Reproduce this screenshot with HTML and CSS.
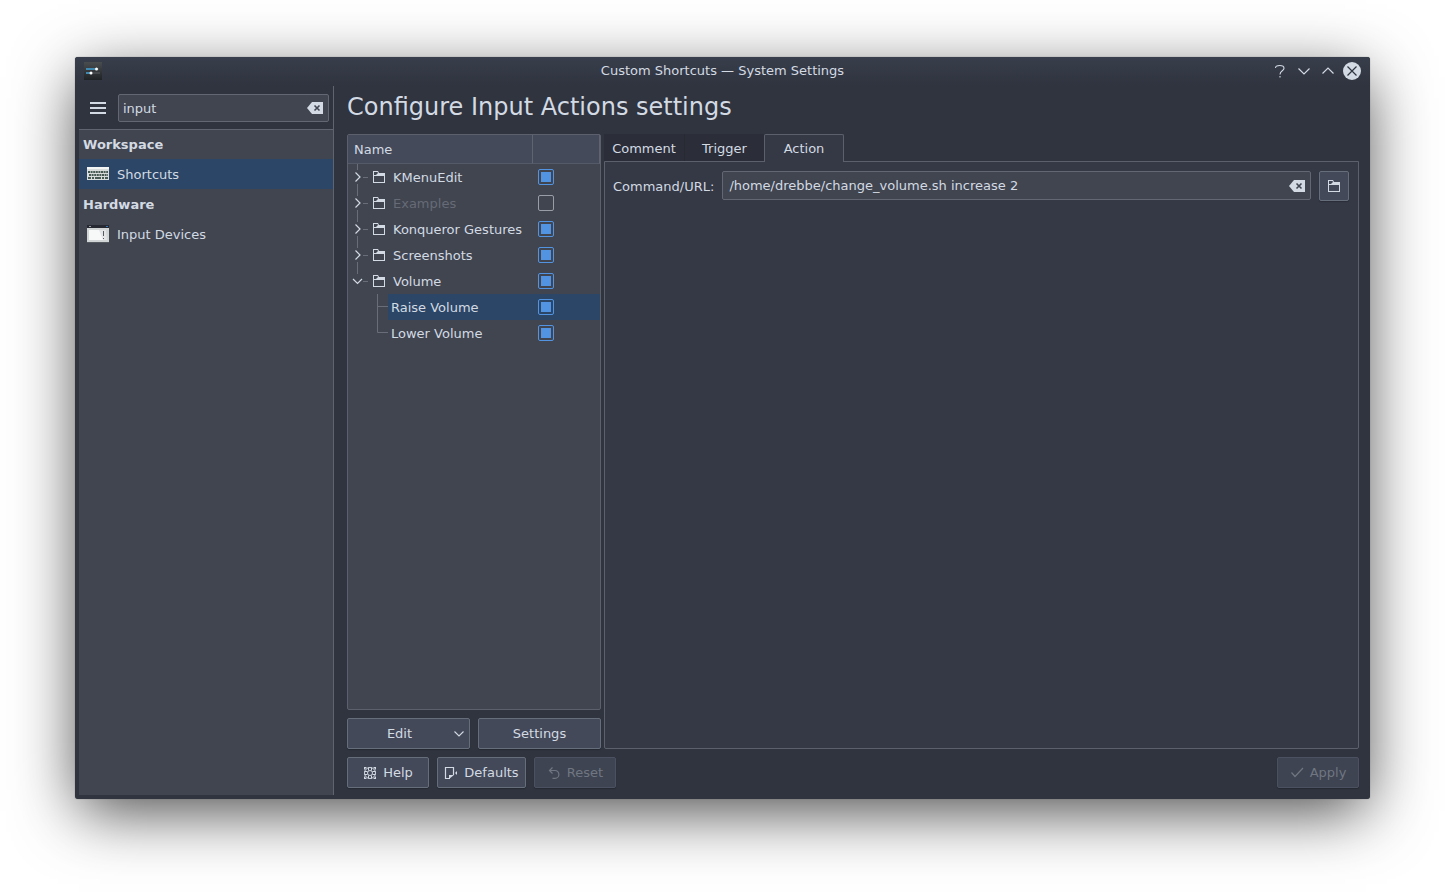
FILE: index.html
```html
<!DOCTYPE html>
<html lang="en">
<head>
<meta charset="utf-8">
<title>Custom Shortcuts — System Settings</title>
<link rel="stylesheet" href="styles.css">
</head>
<body>
<svg class="defs" aria-hidden="true">
  <symbol id="folder" viewBox="0 0 16 16"><path fill="currentColor" fill-rule="evenodd" d="M2 2h5l1 2h6v10H2zM3 3v3h2l2-2-.5-1zM3 7v6h10V7z"/></symbol>
  <symbol id="clear" viewBox="0 0 16 12"><path fill="currentColor" d="M5 0h11v12H5L0 6z"/><path stroke="#404552" stroke-width="1.6" d="M7.500 3.500l5 5m0-5l-5 5"/></symbol>
  <symbol id="down" viewBox="0 0 12 8"><path fill="none" stroke="currentColor" stroke-width="1.100" d="M1.500 1.500L6 6l4.500-4.500"/></symbol>
  <symbol id="branch-closed" viewBox="0 0 24 26"><path stroke="#686d79" fill="none" d="M9.500 0v6M9.500 20v6M15 13.500h5"/><path stroke="#d3dae3" stroke-width="1.200" fill="none" d="M7.500 8.500l4.500 4.500-4.500 4.500"/></symbol>
  <symbol id="branch-open" viewBox="0 0 24 26"><path stroke="#686d79" fill="none" d="M9.500 0v6M15 13.500h5"/><path stroke="#d3dae3" stroke-width="1.200" fill="none" d="M5 11l4.500 4.500 4.500-4.500"/></symbol>
</svg>
<div class="window">
  <header class="titlebar">
    <svg class="app-icon" width="18" height="18" viewBox="0 0 18 18"><defs><linearGradient id="ai" x1="0" y1="0" x2="0" y2="1"><stop offset="0" stop-color="#4a4d50"/><stop offset="1" stop-color="#202325"/></linearGradient></defs><path fill="url(#ai)" d="M0 0h18v18H0z"/><path fill="#3f89b0" d="M2 6h9v2H2zM2 10h4v2H2z"/><path fill="#44484b" d="M8 10h8v2H8zM13 6h2v2h-2z"/><circle cx="12.500" cy="7" r="1.500" fill="#fff"/><circle cx="7" cy="11" r="1.500" fill="#fff"/></svg>
    <h1 class="window-title">Custom Shortcuts — System Settings</h1>
    <div class="window-controls">
      <button class="wm" aria-label="Help"><svg width="18" height="18" viewBox="0 0 18 18"><path fill="none" stroke="#d3dae3" stroke-width="1.100" d="M4.500 6c0-2 1.500-2.500 4.200-2.500S13 4.200 13 6.200C13 9 9 8.500 9 12.500"/><path fill="#8b909a" d="M8 14h2v1.500H8z"/></svg></button>
      <button class="wm" aria-label="Minimize"><svg width="18" height="18" viewBox="0 0 18 18"><path fill="none" stroke="#d3dae3" stroke-width="1.200" d="M3.500 6.500L9 12l5.500-5.500"/></svg></button>
      <button class="wm" aria-label="Maximize"><svg width="18" height="18" viewBox="0 0 18 18"><path fill="none" stroke="#d3dae3" stroke-width="1.200" d="M3.500 11.500L9 6l5.500 5.500"/></svg></button>
      <button class="wm" aria-label="Close"><svg width="18" height="18" viewBox="0 0 18 18"><circle cx="9" cy="9" r="9" fill="#d3dae3"/><path stroke="#2f343f" stroke-width="1.200" d="M4.500 4.500l9 9m0-9l-9 9"/></svg></button>
    </div>
  </header>
  <div class="content">
    <aside class="sidebar">
      <div class="sidebar-tools">
        <button class="menu-button" aria-label="Menu"><svg width="16" height="12" viewBox="0 0 16 12"><path fill="currentColor" d="M0 0h16v2H0zM0 5h16v2H0zM0 10h16v2H0z"/></svg></button>
        <div class="field search">
          <input type="text" value="input" aria-label="Search">
          <button class="clear" aria-label="Clear search"><svg width="16" height="12"><use href="#clear"/></svg></button>
        </div>
      </div>
      <nav class="categories">
        <h2 class="category">Workspace</h2>
        <a class="module selected" href="#shortcuts">
          <svg width="22" height="22" viewBox="0 0 22 22"><path fill="#d9dedd" d="M0 4h22v13H0z"/><path fill="#f4f6f5" d="M0 4h22v2H0z"/><path stroke="#465953" stroke-width="2" stroke-dasharray="2 .6" d="M1 9h20M2 12h19"/><path stroke="#465953" stroke-width="2" d="M1 15h3m1 0h2m1 0h6m1 0h2m1 0h3"/></svg>
          <span class="text">Shortcuts</span></a>
        <h2 class="category">Hardware</h2>
        <a class="module" href="#input-devices">
          <svg width="22" height="22" viewBox="0 0 22 22"><path fill="#262932" d="M0 2h22v3H0z"/><path fill="#9ba0a7" d="M2 3h2v1H2z"/><path fill="#3876b8" d="M19 3h2v1h-2z"/><path fill="#d1d5d6" d="M0 5h22v14H0z"/><path fill="#f7f8f8" d="M2 7h17v10H2z"/><path fill="#e3e5e7" d="M12 7h7l1 10h-4z"/><path fill="#555a60" d="M16 8h1v5h-1zM16 15h1v1h-1zM0 19h22v1H0z"/></svg>
          <span class="text">Input Devices</span></a>
      </nav>
    </aside>
    <main class="main">
      <h2 class="heading">Configure Input Actions settings</h2>
      <div class="panes">
        <section class="tree-pane">
          <div class="tree">
            <table class="actions">
              <thead><tr><th class="name-column">Name</th><th class="check-column" aria-label="Enabled"></th></tr></thead>
              <tbody>
                <tr><td><div class="node"><svg width="24" height="26"><use href="#branch-closed"/></svg><label for="c1"><svg width="16" height="16"><use href="#folder"/></svg><span class="text">KMenuEdit</span></label></div></td><td><input id="c1" type="checkbox" checked></td></tr>
                <tr class="off"><td><div class="node"><svg width="24" height="26"><use href="#branch-closed"/></svg><label for="c2"><svg width="16" height="16"><use href="#folder"/></svg><span class="text">Examples</span></label></div></td><td><input id="c2" type="checkbox"></td></tr>
                <tr><td><div class="node"><svg width="24" height="26"><use href="#branch-closed"/></svg><label for="c3"><svg width="16" height="16"><use href="#folder"/></svg><span class="text">Konqueror Gestures</span></label></div></td><td><input id="c3" type="checkbox" checked></td></tr>
                <tr><td><div class="node"><svg width="24" height="26"><use href="#branch-closed"/></svg><label for="c4"><svg width="16" height="16"><use href="#folder"/></svg><span class="text">Screenshots</span></label></div></td><td><input id="c4" type="checkbox" checked></td></tr>
                <tr><td><div class="node"><svg width="24" height="26"><use href="#branch-open"/></svg><label for="c5"><svg width="16" height="16"><use href="#folder"/></svg><span class="text">Volume</span></label></div></td><td><input id="c5" type="checkbox" checked></td></tr>
                <tr class="current"><td><div class="node leaf"><svg width="40" height="26" viewBox="0 0 40 26"><path fill="none" stroke="#686d79" d="M29.500 0v26M30 12.500h10"/></svg><label for="c6"><span class="text">Raise Volume</span></label></div></td><td><input id="c6" type="checkbox" checked></td></tr>
                <tr><td><div class="node leaf"><svg width="40" height="26" viewBox="0 0 40 26"><path fill="none" stroke="#686d79" d="M29.500 0v12.500H40"/></svg><label for="c7"><span class="text">Lower Volume</span></label></div></td><td><input id="c7" type="checkbox" checked></td></tr>
              </tbody>
            </table>
          </div>
          <div class="tree-buttons">
            <button class="button edit"><span>Edit</span><svg width="12" height="8"><use href="#down"/></svg></button>
            <button class="button">Settings</button>
          </div>
        </section>
        <section class="tab-pane">
          <div class="tabs" role="tablist">
            <button class="tab" role="tab">Comment</button>
            <button class="tab" role="tab">Trigger</button>
            <button class="tab active" role="tab" aria-selected="true">Action</button>
          </div>
          <div class="panel" role="tabpanel">
            <label for="command">Command/URL:</label>
            <div class="field command">
              <input id="command" type="text" value="/home/drebbe/change_volume.sh increase 2">
              <button class="clear" aria-label="Clear command"><svg width="16" height="12"><use href="#clear"/></svg></button>
            </div>
            <button class="button browse" aria-label="Browse"><svg width="16" height="16"><use href="#folder"/></svg></button>
          </div>
        </section>
      </div>
      <footer class="footer">
        <button class="button help"><svg width="14" height="14" viewBox="0 0 14 14"><g fill="none" stroke="currentColor"><circle cx="7" cy="7" r="5.500"/><circle cx="7" cy="7" r="2.500"/><path d="M5.500 1.500v3M8.500 1.500v3M5.500 9.500v3M8.500 9.500v3M1.500 5.500h3M1.500 8.500h3M9.500 5.500h3M9.500 8.500h3"/></g><path fill="currentColor" d="M1 1h3L1 4zM10 1h3v3zM1 10l3 3H1zM13 10v3h-3z"/></svg>Help</button>
        <button class="button defaults"><svg width="14" height="14" viewBox="0 0 14 14"><path fill="none" stroke="currentColor" stroke-width="1.200" d="M6 12.500H1.500V1.500h8V9"/><path fill="currentColor" d="M5 13V9h5zM11 7l2-2v4z"/></svg>Defaults</button>
        <button class="button reset" disabled><svg width="14" height="14" viewBox="0 0 14 14"><path fill="none" stroke="currentColor" stroke-width="1.200" d="M5.500 1.500l-3 3 3 3M2.500 4.500H8a3.800 3.800 0 0 1 0 7.800H5.500"/></svg>Reset</button>
        <button class="button apply" disabled><svg width="14" height="14" viewBox="0 0 14 14"><path fill="none" stroke="currentColor" stroke-width="1.200" d="M1.500 6.500l3.500 4L13 2"/></svg>Apply</button>
      </footer>
    </main>
  </div>
</div>
</body>
</html>
```
FILE: styles.css
```css
* { box-sizing: border-box; }

body {
  margin: 0;
  min-height: 100vh;
  padding: 57px 75px 93px;
  display: flex;
  background: #fff;
  color: #d3dae3;
  font: 13px/16px "DejaVu Sans", sans-serif;
}

button, input { font: inherit; color: inherit; }
button { margin: 0; padding: 0; border: 0; background: none; }
svg { display: block; flex: none; }
h1, h2 { margin: 0; font-size: 13px; }
.defs { display: none; }
.text { padding-top: 2px; }

.window {
  flex: 1;
  display: flex;
  flex-direction: column;
  background: #2f343f;
  border-radius: 3px;
  box-shadow: 0 0 1px #5b6066, 0 16px 60px -4px rgba(0, 0, 0, .72);
}

.titlebar {
  display: grid;
  grid-template-columns: 1fr auto 1fr;
  align-items: center;
  height: 28px;
  padding: 0 9px;
  border-radius: 3px 3px 0 0;
  background: linear-gradient(#383e4b, #2f343f);
}
.window-title { font-weight: normal; }
.window-controls { display: flex; justify-content: flex-end; gap: 6px; }

.content { flex: 1; display: flex; padding: 1px 11px 4px 4px; }

.sidebar {
  width: 255px;
  display: flex;
  flex-direction: column;
  border-right: 1px solid #5f6470;
}
.sidebar-tools {
  display: flex;
  align-items: center;
  gap: 12px;
  height: 43px;
  padding: 0 4px 0 11px;
}
.field {
  display: flex;
  align-items: center;
  height: 28px;
  padding: 0 5px 0 4px;
  border: 1px solid #626773;
  border-radius: 2px;
  background: #404550;
}
.search { flex: 1; min-width: 0; }
.field input {
  flex: 1;
  min-width: 0;
  padding: 0;
  border: 0;
  outline: 0;
  background: transparent;
}
.field.search input { padding-top: 2px; }
.categories { flex: 1; border-top: 1px solid #5f6470; background: #404550; }
.category { padding: 0 4px; line-height: 29px; }
.module + .category { padding-top: 1px; }
.module {
  display: flex;
  align-items: center;
  gap: 8px;
  height: 30px;
  padding: 0 8px;
  color: inherit;
  text-decoration: none;
}
.selected { background: #2b4666; }

.main { flex: 1; min-width: 0; display: flex; flex-direction: column; padding: 0 0 7px 13px; }
.heading { height: 48px; font-size: 24px; line-height: 43px; font-weight: normal; }
.panes { flex: 1; display: flex; gap: 3px; }
.tree-pane { width: 254px; display: flex; flex-direction: column; gap: 8px; }
.tree { flex: 1; border: 1px solid #5b606c; border-radius: 2px; background: #404550; }

.actions { width: 100%; table-layout: fixed; border-collapse: separate; border-spacing: 0; }
.actions th {
  height: 29px;
  padding: 2px 6px 0;
  border-right: 1px solid #5f6470;
  border-bottom: 1px solid #555a68;
  background: #444a5a;
  font-weight: normal;
  text-align: left;
}
.actions .check-column { width: 67px; }
.actions td { height: 26px; padding: 0; }
.actions td:last-child { padding-left: 5px; }
.node { display: flex; height: 26px; }
.node label { flex: 1; display: flex; align-items: center; gap: 6px; white-space: nowrap; }
.node > svg + label { padding-right: 0; margin-left: -1px; }
.leaf > svg + label { margin-left: 0; padding-left: 3px; }
.off .text { color: #666b76; }
.current label, .current td:last-child { background: #2b4666; }

input[type="checkbox"] {
  appearance: none;
  display: block;
  width: 16px;
  height: 16px;
  margin: 0;
  border: 1px solid #999da6;
  border-radius: 2px;
  background: transparent;
}
input[type="checkbox"]:checked {
  padding: 2px;
  border-color: #5294e2;
  background: #5294e2 content-box;
}

.tree-buttons { display: grid; grid-template-columns: 1fr 1fr; gap: 8px; }
.button {
  display: flex;
  align-items: center;
  justify-content: center;
  gap: 6px;
  height: 31px;
  border: 1px solid #666d7b;
  border-radius: 2px;
  background: #434959;
  box-shadow: 0 1px 1px rgba(0, 0, 0, .2);
}
.button:disabled { border-color: #4b5160; background: #3e4451; color: #707682; }
.edit span { flex: 1; padding-left: 4px; }
.edit { padding-right: 4px; }

.tab-pane { flex: 1; min-width: 0; display: flex; flex-direction: column; }
.tabs { display: flex; height: 28px; margin-bottom: -1px; }
.tab { width: 80px; padding-top: 1px; background: #2b2e38; background-clip: padding-box; }
.tab + .tab { border-left: 1px solid #272a33; }
.tab.active {
  z-index: 1;
  padding-top: 0;
  border: 1px solid #5b606c;
  border-bottom: 0;
  border-radius: 2px 2px 0 0;
  background: #353945;
}
.panel {
  flex: 1;
  display: flex;
  align-items: flex-start;
  gap: 8px;
  padding: 9px 9px 9px 8px;
  border: 1px solid #5b606c;
  border-radius: 0 0 2px 2px;
  background: #353945;
}
.panel label { line-height: 31px; }
.command { flex: 1; height: 29px; padding-left: 6px; }
.browse { width: 30px; height: 30px; }

.footer { display: flex; gap: 8px; padding-top: 8px; }
.help, .reset, .apply { width: 82px; }
.defaults { width: 89px; }
.apply { margin-left: auto; }
```
